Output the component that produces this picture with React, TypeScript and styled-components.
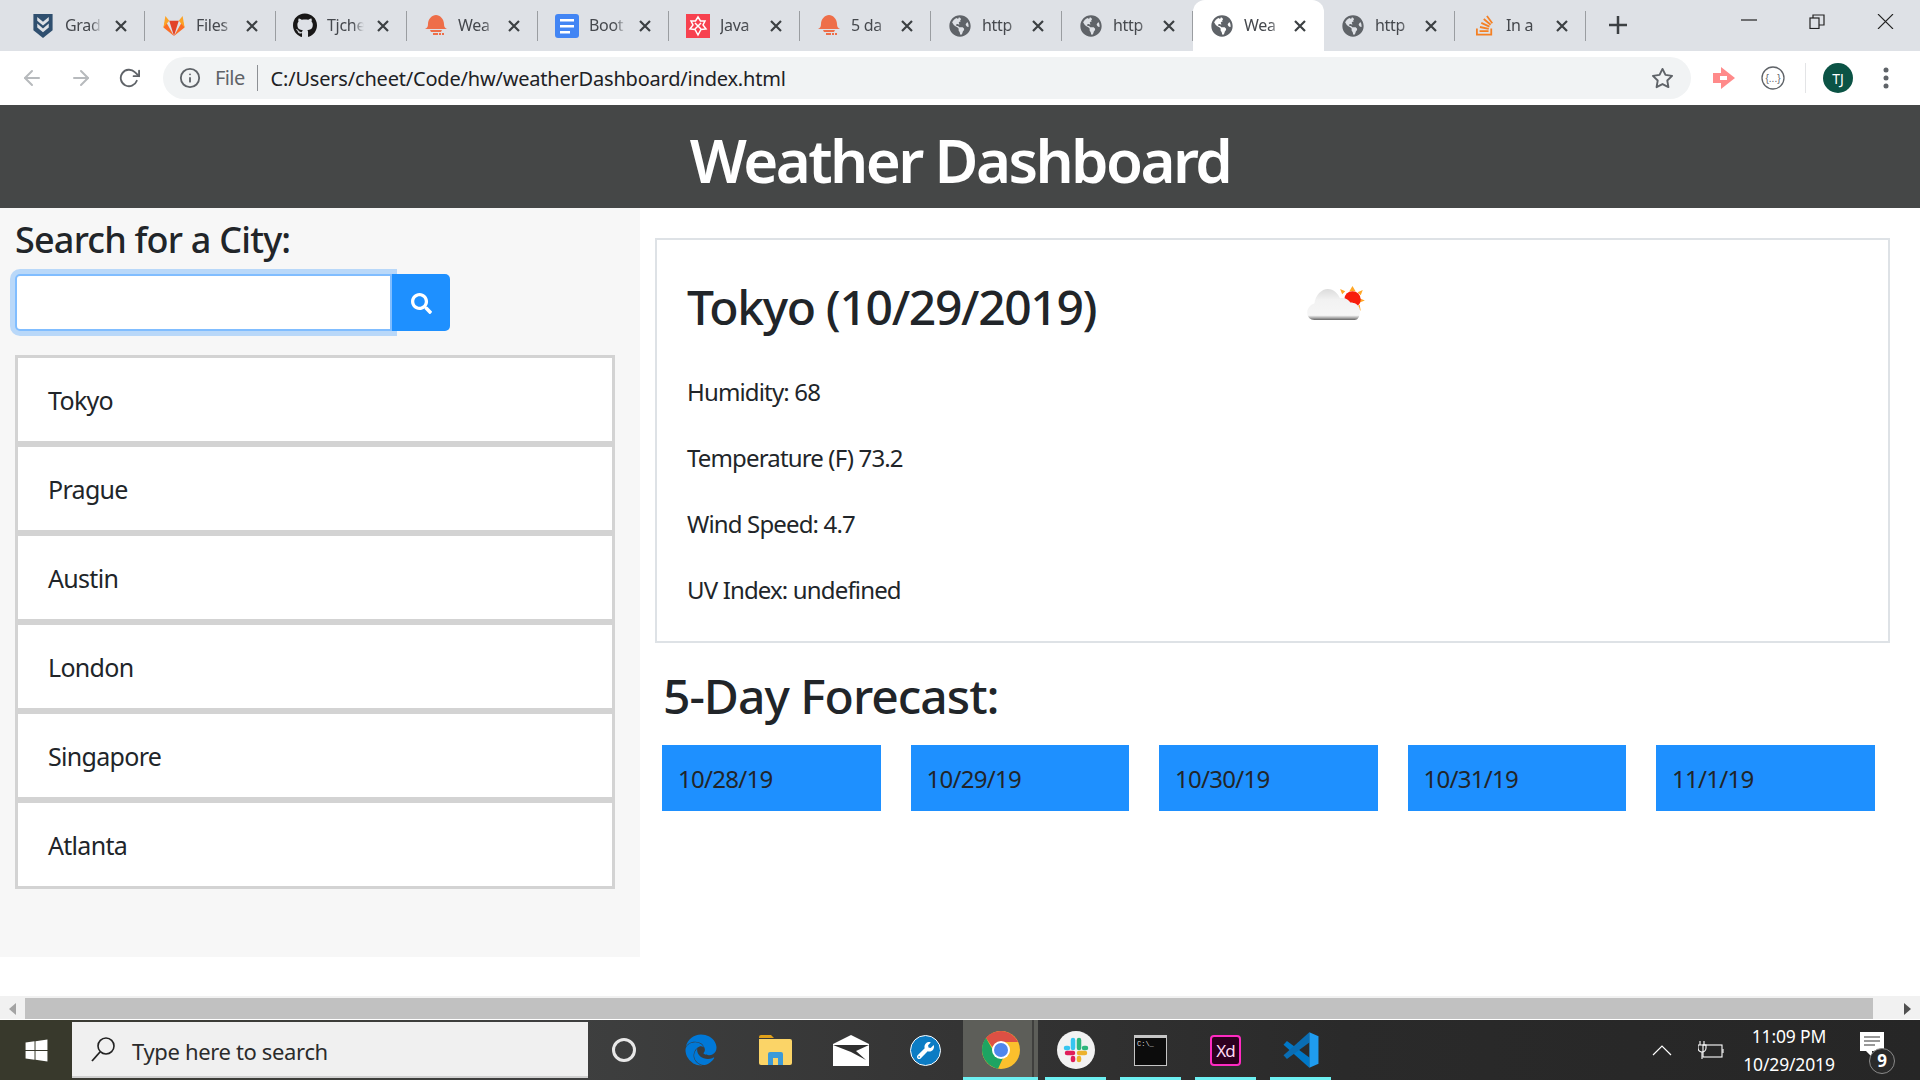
import React from "react";
import styled, { createGlobalStyle } from "styled-components";
import { FaEdge, FaGithub, FaGlobeAmericas, FaSearch, FaStackOverflow, FaWindows, FaWrench } from "react-icons/fa";
import { FiArrowLeft, FiArrowRight, FiInfo, FiRotateCw, FiStar } from "react-icons/fi";

const GlobalStyle = createGlobalStyle`
  html, body {
    margin: 0;
    padding: 0;
    width: 1920px;
    height: 1080px;
    overflow: hidden;
    background: #fff;
    font-family: "Noto Sans", "Open Sans", sans-serif;
    color: #212529;
  }
  * {
    box-sizing: border-box;
  }
`;

const Page = styled.div`
  display: flex;
  flex-direction: column;
  width: 1920px;
  height: 1080px;
`;

/* browser chrome */
const TabStrip = styled.div`
  display: flex;
  align-items: stretch;
  height: 51px;
  padding-left: 14px;
  background: #dee1e6;
`;

const Tab = styled.div<{ $active?: boolean }>`
  display: flex;
  align-items: center;
  width: 131px;
  padding-left: 17px;
  position: relative;
  background: ${(p) => (p.$active ? "#fff" : "transparent")};
  border-radius: ${(p) => (p.$active ? "12px 12px 0 0" : "0")};
  &::after {
    content: "";
    position: absolute;
    right: 0;
    top: 11px;
    height: 30px;
    width: 1px;
    background: ${(p) => (p.$active ? "transparent" : "#9a9da1")};
  }
`;

const TabIcon = styled.span`
  display: flex;
  align-items: center;
  justify-content: center;
  width: 24px;
  height: 26px;
  flex: none;
`;

const TabTitle = styled.span`
  width: 37px;
  margin: -2px 0 0 10px;
  font-size: 16px;
  letter-spacing: -0.3px;
  color: #45484d;
  white-space: nowrap;
  overflow: hidden;
  -webkit-mask-image: linear-gradient(90deg, #000 70%, transparent);
  mask-image: linear-gradient(90deg, #000 70%, transparent);
`;

const TabClose = styled.svg`
  width: 14px;
  height: 14px;
  margin-left: 12px;
  flex: none;
`;

const NewTab = styled.svg`
  width: 20px;
  height: 20px;
  margin: 15px 0 0 22px;
`;

const WindowControls = styled.div`
  display: flex;
  align-items: flex-start;
  margin-left: auto;
  padding: 14px 26px 0 0;
  gap: 52px;
`;

const Toolbar = styled.div`
  display: flex;
  align-items: center;
  height: 54px;
  padding-left: 20px;
  background: #fff;
`;

const NavButton = styled.span<{ $off?: boolean }>`
  display: flex;
  width: 24px;
  margin-right: 25px;
  color: ${(p) => (p.$off ? "#b7babd" : "#5f6368")};
`;

const Omnibox = styled.div`
  display: flex;
  align-items: center;
  width: 1528px;
  height: 42px;
  margin-left: -4px;
  padding: 0 20px 0 16px;
  border-radius: 21px;
  background: #f1f3f4;
  font-size: 20px;
`;

const SecurityLabel = styled.span`
  margin-left: 14px;
  padding-right: 12px;
  border-right: 1px solid #8d9094;
  line-height: 26px;
  font-size: 20px;
  letter-spacing: -0.6px;
  color: #5f6368;
`;

const Url = styled.span`
  margin-left: 13px;
  letter-spacing: -0.2px;
  color: #202124;
`;

const StarSlot = styled.span`
  display: flex;
  margin: 0 -3px 0 auto;
  color: #5f6368;
`;

const ExtensionArea = styled.div`
  display: flex;
  align-items: center;
  padding-left: 22px;
`;

const ToolbarDivider = styled.span`
  width: 1px;
  height: 30px;
  margin: 0 17px 0 20px;
  background: #e3e4e6;
`;

const Avatar = styled.span`
  display: flex;
  align-items: center;
  justify-content: center;
  width: 30px;
  height: 30px;
  border-radius: 50%;
  background: #0b5345;
  color: #fff;
  font-size: 14px;
`;

const MenuDots = styled.svg`
  width: 6px;
  height: 22px;
  margin-left: 30px;
`;

/* page */
const Banner = styled.header`
  display: flex;
  justify-content: center;
  height: 103px;
  background: #454747;
  color: #fff;
  font-size: 60px;
  font-weight: 600;
  line-height: 110px;
  letter-spacing: -2.6px;
`;

const Content = styled.main`
  display: flex;
  flex: 1;
  min-height: 0;
`;

const Sidebar = styled.aside`
  width: 640px;
  height: 749px;
  padding: 0 25px 0 15px;
  background: #f7f7f7;
`;

const SearchHeading = styled.h2`
  margin: 0;
  padding-top: 7px;
  font-size: 36px;
  font-weight: 500;
  line-height: 50px;
  letter-spacing: -0.8px;
`;

const SearchRow = styled.form`
  display: flex;
  margin: 9px 0 24px;
`;

const CityInput = styled.input`
  width: 377px;
  height: 57px;
  border: 2.5px solid #80bdff;
  border-radius: 5px 0 0 5px;
  box-shadow: 0 0 0 5px rgba(0, 123, 255, 0.25);
  background: #fff;
  outline: none;
`;

const SearchButton = styled.button`
  display: flex;
  align-items: center;
  justify-content: center;
  position: relative;
  width: 58px;
  height: 57px;
  padding: 2px 0 0;
  border: 0;
  border-radius: 0 5px 5px 0;
  background: #1e90ff;
  color: #fff;
`;

const CityList = styled.ul`
  width: 600px;
  margin: 0;
  padding: 0;
  list-style: none;
`;

const CityItem = styled.li`
  height: 89px;
  padding-left: 30px;
  border: 3px solid #d3d3d3;
  background: #fff;
  font-size: 25px;
  line-height: 84px;
  letter-spacing: -0.7px;
`;

const Details = styled.section`
  flex: 1;
  padding: 30px 30px 0 15px;
`;

const CurrentCard = styled.div`
  height: 405px;
  padding: 29px 30px 0;
  border: 2px solid #dee2e6;
`;

const TitleRow = styled.div`
  display: flex;
  align-items: flex-start;
`;

const CityTitle = styled.h2`
  margin: 0;
  font-size: 48px;
  font-weight: 500;
  line-height: 76px;
  letter-spacing: -1.35px;
`;

const WeatherIcon = styled.svg`
  width: 58px;
  height: 35px;
  margin: 17px 0 0 211px;
  filter: blur(0.6px);
`;

const Stat = styled.p`
  margin: 0;
  height: 66px;
  font-size: 24px;
  line-height: 66px;
  letter-spacing: -0.85px;
  &:first-of-type {
    margin-top: 14px;
  }
`;

const ForecastHeading = styled.h2`
  margin: 0;
  padding: 18px 0 0 8px;
  height: 102px;
  font-size: 48px;
  font-weight: 500;
  line-height: 70px;
  letter-spacing: -1px;
`;

const ForecastRow = styled.div`
  display: flex;
  gap: 30px;
  padding-left: 7px;
`;

const ForecastCard = styled.div`
  width: 218.5px;
  height: 66px;
  padding-left: 16px;
  background: #1e90ff;
  font-size: 24px;
  line-height: 68px;
  letter-spacing: -0.7px;
`;

/* horizontal scrollbar */
const ScrollBar = styled.div`
  display: flex;
  align-items: center;
  height: 24px;
  padding-top: 2px;
  border-bottom: 1px solid #fff;
  background: #f1f1f1;
`;

const ScrollArrow = styled.span<{ $dir: "left" | "right" }>`
  width: 0;
  height: 0;
  margin: ${(p) => (p.$dir === "left" ? "0 9px" : "0 9px 0 auto")};
  border-top: 6px solid transparent;
  border-bottom: 6px solid transparent;
  ${(p) => (p.$dir === "left" ? "border-right: 7px solid #a3a3a3;" : "border-left: 7px solid #505050;")}
`;

const ScrollThumb = styled.span`
  width: 1848px;
  height: 21px;
  background: #c1c1c1;
`;

/* windows taskbar */
const Taskbar = styled.footer`
  display: flex;
  align-items: stretch;
  height: 60px;
  background: linear-gradient(90deg, #3a3a32 0, #3e3f3f 30%, #353535 48%, #2a2a2a 70%, #262626 100%);
`;

const StartButton = styled.div`
  display: flex;
  align-items: center;
  justify-content: center;
  width: 72px;
  background: #38392c;
  color: #fff;
`;

const TaskSearch = styled.div`
  display: flex;
  align-items: center;
  width: 516px;
  margin: 2px 0;
  padding-left: 17px;
  border: 2px solid #d0d0d0;
  border-width: 0 0 2px;
  background: #f0f0f0;
  color: #2b2b2b;
  font-size: 22px;
  letter-spacing: -0.35px;
`;

const TaskSearchText = styled.span`
  padding-top: 3px;
`;

const SearchGlass = styled.svg`
  width: 28px;
  height: 28px;
  margin-right: 15px;
`;

const TaskIcons = styled.div`
  display: flex;
`;

const TaskSlot = styled.div<{ $open?: boolean; $current?: boolean }>`
  display: flex;
  align-items: center;
  justify-content: center;
  position: relative;
  width: 75px;
  background: ${(p) => (p.$current ? "linear-gradient(90deg, #5d5e59 92%, #3f3f3d 92%, #3f3f3d 95%, #5d5e59 95%)" : "transparent")};
  &::after {
    content: "";
    display: ${(p) => (p.$open ? "block" : "none")};
    position: absolute;
    left: ${(p) => (p.$current ? "0" : "7px")};
    right: ${(p) => (p.$current ? "0" : "7px")};
    bottom: 0;
    height: 3px;
    background: #6df0f2;
  }
`;

const CortanaRing = styled.span`
  width: 24px;
  height: 24px;
  margin-right: 3px;
  border: 3px solid #e8e8e8;
  border-radius: 50%;
`;

const WrenchBadge = styled.span`
  display: flex;
  align-items: center;
  justify-content: center;
  width: 31px;
  height: 31px;
  border: 1px solid #fff;
  border-radius: 50%;
  background: #0c7cc4;
  color: #fff;
`;

const XdBadge = styled.span`
  display: flex;
  align-items: center;
  justify-content: center;
  width: 31px;
  height: 31px;
  border: 2.5px solid #ff2bc2;
  border-radius: 4px;
  background: #2e001f;
  color: #ffd9f2;
  font-size: 17px;
  letter-spacing: -1px;
`;

const Tray = styled.div`
  display: flex;
  align-items: center;
  margin-left: auto;
  padding-right: 26px;
  color: #fff;
`;

const Clock = styled.div`
  width: 130px;
  font-size: 17.5px;
  line-height: 28px;
  text-align: center;
  letter-spacing: -0.15px;
`;

const NoticeWrap = styled.div`
  position: relative;
  width: 34px;
  height: 36px;
  margin-left: 6px;
`;

const NoticeBadge = styled.span`
  position: absolute;
  right: -1px;
  bottom: -6px;
  width: 26px;
  height: 26px;
  border: 1px solid #8a8a8a;
  border-radius: 50%;
  background: #2a2a2a;
  font-size: 17px;
  font-weight: 700;
  line-height: 24px;
  text-align: center;
`;

const Chevron = styled.svg`
  width: 20px;
  height: 12px;
`;

const BatteryIcon = styled.svg`
  width: 26px;
  height: 18px;
  margin-left: 26px;
`;

const ExtensionRing = styled.svg`
  width: 24px;
  height: 24px;
  margin-left: 24px;
`;

const GradeLogo = () => (
  <svg width="20" height="24" viewBox="0 0 20 25">
    <path d="M0 0h20v17l-10 8-10-8z" fill="#2f4f6f" />
    <path d="M4 3l6 5 6-5v4l-6 5-6-5zM4 10l6 5 6-5v4l-6 5-6-5z" fill="#dee1e6" />
  </svg>
);

const FoxLogo = () => (
  <svg width="24" height="23" viewBox="0 0 24 24">
    <path d="M12 23L1 14l2-7z" fill="#fc6d26" />
    <path d="M12 23l11-9-2-7z" fill="#fc6d26" />
    <path d="M12 23L7 7h10z" fill="#e24329" />
    <path d="M1 14l2-12 4 5z" fill="#fca326" />
    <path d="M23 14L21 2l-4 5z" fill="#fca326" />
  </svg>
);

const DomeLogo = () => (
  <svg width="24" height="22" viewBox="0 0 24 22">
    <path d="M1 14c2-1 3-2 3-5 0-5 4-9 8-9s8 4 8 9c0 3 1 4 3 5z" fill="#ee6e49" />
    <path d="M6 15h12l-1 2H7zM9 18h5v2H9zM15 18h2v2h-2zM18 18h2v2h-2z" fill="#ee6e49" />
  </svg>
);

const DocsLogo = () => (
  <svg width="24" height="24" viewBox="0 0 24 24">
    <rect width="24" height="24" rx="3" fill="#4285f4" />
    <path d="M5 5h14v2.500H5zM5 11h14v2.500H5zM5 17h10v2.500H5z" fill="#fff" />
  </svg>
);

const JavaLogo = () => (
  <svg width="24" height="24" viewBox="0 0 24 24">
    <rect width="24" height="24" fill="#f7414f" />
    <path d="M12 3l2.500 4H19l-2 4 3 4-5 .5L12 21l-3-5.500L4 15l3-4-2-4h4.500z" fill="none" stroke="#fff" strokeWidth="1.500" />
    <path d="M9 9l6 6M15 9l-6 6" stroke="#fff" strokeWidth="1.500" />
  </svg>
);

const Globe = () => <FaGlobeAmericas size={22} color="#5f6368" />;

const tabs = [
  { title: "Grad", icon: <GradeLogo /> },
  { title: "Files", icon: <FoxLogo /> },
  { title: "Tjche", icon: <FaGithub size={25} color="#181717" /> },
  { title: "Wea", icon: <DomeLogo /> },
  { title: "Boot", icon: <DocsLogo /> },
  { title: "Java", icon: <JavaLogo /> },
  { title: "5 da", icon: <DomeLogo /> },
  { title: "http", icon: <Globe /> },
  { title: "http", icon: <Globe /> },
  { title: "Wea", icon: <Globe />, active: true },
  { title: "http", icon: <Globe /> },
  { title: "In a", icon: <FaStackOverflow size={23} color="#f48024" /> },
];

const cities = ["Tokyo", "Prague", "Austin", "London", "Singapore", "Atlanta"];
const stats = ["Humidity: 68", "Temperature (F) 73.2", "Wind Speed: 4.7", "UV Index: undefined"];
const forecast = ["10/28/19", "10/29/19", "10/30/19", "10/31/19", "11/1/19"];

const SlackLogo = () => (
  <svg width="38" height="38" viewBox="0 0 38 38">
    <circle cx="19" cy="19" r="19" fill="#f2f2f2" />
    <g strokeWidth="4.500" strokeLinecap="round" fill="none">
      <path d="M16 9v8M9 17h2" stroke="#36c5f0" />
      <path d="M22 9v8M27 17h2" stroke="#2eb67d" />
      <path d="M10 22h6M16 27v2" stroke="#e01e5a" />
      <path d="M22 22h6M22 27v2" stroke="#ecb22e" />
    </g>
  </svg>
);

const ChromeLogo = () => (
  <svg width="38" height="38" viewBox="0 0 38 38">
    <circle cx="19" cy="19" r="19" fill="#fbc02d" />
    <path d="M19 0c8 0 14 5 17 11H19c-4 0-7 2-8 6L4 7c3-4 9-7 15-7z" fill="#dd5044" />
    <path d="M4 7l8 14c2 4 5 6 9 6l-5 10.800C7 36 0 28 0 19c0-5 1-8 4-12z" fill="#1da462" />
    <circle cx="19" cy="19" r="9" fill="#fff" />
    <circle cx="19" cy="19" r="7" fill="#4f86ec" />
  </svg>
);

const FolderLogo = () => (
  <svg width="33" height="30" viewBox="0 0 33 30">
    <path d="M0 2a2 2 0 0 1 2-2h10l3 3H0z" fill="#e0a019" />
    <path d="M0 4h31a2 2 0 0 1 2 2v22a2 2 0 0 1-2 2H2a2 2 0 0 1-2-2z" fill="#fbd467" />
    <path d="M9 30V19a2 2 0 0 1 2-2h11a2 2 0 0 1 2 2v11h-5v-7h-5v7z" fill="#3c9ad8" />
  </svg>
);

const MailLogo = () => (
  <svg width="36" height="31" viewBox="0 0 36 31">
    <path d="M0 9L18 0l18 9v22H0z" fill="#fff" />
    <path d="M0 10h36l-13 6 10 9-15-8z" fill="#2f2f2f" />
  </svg>
);

const TerminalLogo = () => (
  <svg width="33" height="31" viewBox="0 0 33 31">
    <rect width="33" height="31" fill="#c6c6c6" />
    <rect x="1" y="3" width="31" height="27" fill="#0c0c0c" />
    <text x="3" y="11" fontSize="7" fill="#ddd" fontFamily="Liberation Mono, monospace">C:\_</text>
  </svg>
);

const VsCodeLogo = () => (
  <svg width="38" height="38" viewBox="0 0 100 100">
    <path d="M13 26l59 44v27L4 36z" fill="#0078c8" />
    <path d="M72 3v27L13 74 4 64z" fill="#0a6db3" />
    <path d="M72 3l24 11v72L72 97z" fill="#1f9cf0" />
  </svg>
);

const WeatherGlyph = () => (
  <WeatherIcon viewBox="0 0 56 34">
    <defs>
      <linearGradient id="cloud" x1="0" y1="0" x2="0" y2="1">
        <stop offset="0" stopColor="#dcdcdc" />
        <stop offset="0.35" stopColor="#f2f2f2" />
        <stop offset="0.85" stopColor="#f6f6f6" />
        <stop offset="0.92" stopColor="#b5b5b5" />
        <stop offset="1" stopColor="#666" />
      </linearGradient>
    </defs>
    <g fill="#ffa726">
      <path d="M32 3l5 2-3 3zM44 0l3 5h-6zM54 4l-2 5-3-3zM56 14l-5 2v-4zM52 24l-4-3 3-3z" />
    </g>
    <circle cx="44" cy="13" r="8" fill="#f81e0c" />
    <path d="M7 33c-4 0-7-3-7-7s3-8 7-9c1-8 7-14 13-14 6 0 10 5 12 9 4-1 8 1 10 4 4 0 8 2 9 6 1 6-1 11-5 11z" fill="url(#cloud)" />
  </WeatherIcon>
);

function App() {
  return (
    <Page>
      <GlobalStyle />
      <TabStrip>
        {tabs.map((tab, i) => (
          <Tab key={i} $active={tab.active}>
            <TabIcon>{tab.icon}</TabIcon>
            <TabTitle>{tab.title}</TabTitle>
            <TabClose viewBox="0 0 14 14">
              <path d="M2 2l10 10M12 2L2 12" stroke="#3c4043" strokeWidth="2.200" />
            </TabClose>
          </Tab>
        ))}
        <NewTab viewBox="0 0 20 20">
          <path d="M10 1v18M1 10h18" stroke="#3c4043" strokeWidth="2.500" />
        </NewTab>
        <WindowControls>
          <svg width="16" height="15" viewBox="0 0 16 15">
            <path d="M0 6h16" stroke="#222" strokeWidth="1.200" />
          </svg>
          <svg width="16" height="15" viewBox="0 0 16 15" fill="none" stroke="#222" strokeWidth="1.200">
            <rect x="1" y="4" width="9" height="10.500" />
            <path d="M4 4V1h11v10h-5" />
          </svg>
          <svg width="17" height="15" viewBox="0 0 17 15">
            <path d="M1 0l15 15M16 0L1 15" stroke="#222" strokeWidth="1.100" />
          </svg>
        </WindowControls>
      </TabStrip>

      <Toolbar>
        <NavButton $off><FiArrowLeft size={24} /></NavButton>
        <NavButton $off><FiArrowRight size={24} /></NavButton>
        <NavButton><FiRotateCw size={22} /></NavButton>
        <Omnibox>
          <FiInfo size={22} color="#5f6368" />
          <SecurityLabel>File</SecurityLabel>
          <Url>C:/Users/cheet/Code/hw/weatherDashboard/index.html</Url>
          <StarSlot><FiStar size={23} /></StarSlot>
        </Omnibox>
        <ExtensionArea>
          <svg width="24" height="26" viewBox="0 0 24 26">
            <path d="M0 8h8V2l14 11L8 24v-6H0z" fill="#ff8a8a" />
            <path d="M7 11h7v4H7z" fill="#fff" />
          </svg>
          <ExtensionRing viewBox="0 0 24 24">
            <circle cx="12" cy="12" r="11" fill="none" stroke="#5f6368" strokeWidth="1.300" />
            <text x="12" y="16" fontSize="10" textAnchor="middle" fill="#5f6368" fontFamily="Liberation Sans, sans-serif">{"{...}"}</text>
          </ExtensionRing>
          <ToolbarDivider />
          <Avatar>TJ</Avatar>
          <MenuDots viewBox="0 0 6 22">
            <circle cx="3" cy="3" r="2.500" fill="#5f6368" />
            <circle cx="3" cy="11" r="2.500" fill="#5f6368" />
            <circle cx="3" cy="19" r="2.500" fill="#5f6368" />
          </MenuDots>
        </ExtensionArea>
      </Toolbar>

      <Banner>Weather Dashboard</Banner>

      <Content>
        <Sidebar>
          <SearchHeading>Search for a City:</SearchHeading>
          <SearchRow>
            <CityInput type="text" />
            <SearchButton type="button"><FaSearch size={21} /></SearchButton>
          </SearchRow>
          <CityList>
            {cities.map((city) => (
              <CityItem key={city}>{city}</CityItem>
            ))}
          </CityList>
        </Sidebar>

        <Details>
          <CurrentCard>
            <TitleRow>
              <CityTitle>Tokyo (10/29/2019)</CityTitle>
              <WeatherGlyph />
            </TitleRow>
            {stats.map((stat) => (
              <Stat key={stat}>{stat}</Stat>
            ))}
          </CurrentCard>
          <ForecastHeading>5-Day Forecast:</ForecastHeading>
          <ForecastRow>
            {forecast.map((day) => (
              <ForecastCard key={day}>{day}</ForecastCard>
            ))}
          </ForecastRow>
        </Details>
      </Content>

      <ScrollBar>
        <ScrollArrow $dir="left" />
        <ScrollThumb />
        <ScrollArrow $dir="right" />
      </ScrollBar>

      <Taskbar>
        <StartButton><FaWindows size={25} /></StartButton>
        <TaskSearch>
          <SearchGlass viewBox="0 0 28 28">
            <circle cx="17" cy="11" r="8" fill="none" stroke="#222" strokeWidth="1.600" />
            <path d="M11 17L3 26" stroke="#222" strokeWidth="1.800" />
          </SearchGlass>
          <TaskSearchText>Type here to search</TaskSearchText>
        </TaskSearch>
        <TaskIcons>
          <TaskSlot><CortanaRing /></TaskSlot>
          <TaskSlot><FaEdge size={32} color="#0078d7" /></TaskSlot>
          <TaskSlot><FolderLogo /></TaskSlot>
          <TaskSlot><MailLogo /></TaskSlot>
          <TaskSlot><WrenchBadge><FaWrench size={17} /></WrenchBadge></TaskSlot>
          <TaskSlot $open $current><ChromeLogo /></TaskSlot>
          <TaskSlot $open><SlackLogo /></TaskSlot>
          <TaskSlot $open><TerminalLogo /></TaskSlot>
          <TaskSlot $open><XdBadge>Xd</XdBadge></TaskSlot>
          <TaskSlot $open><VsCodeLogo /></TaskSlot>
        </TaskIcons>
        <Tray>
          <Chevron viewBox="0 0 20 12">
            <path d="M1 11l9-9 9 9" fill="none" stroke="#fff" strokeWidth="1.200" />
          </Chevron>
          <BatteryIcon viewBox="0 0 26 18" fill="none" stroke="#fff" strokeWidth="1.100">
            <rect x="5" y="4" width="19" height="12" />
            <path d="M25 8v4" />
            <path d="M2 0v4M6 0v4M0 4h8v3a4 4 0 0 1-8 0zM4 11v7" />
          </BatteryIcon>
          <Clock>
            11:09 PM
            <br />
            10/29/2019
          </Clock>
          <NoticeWrap>
            <svg width="24" height="28" viewBox="0 0 24 28">
              <path d="M0 0h24v19H12l0 6-6-6H0z" fill="#fff" />
              <path d="M4 5h16M4 9h16M4 13h11" stroke="#333" strokeWidth="1.200" />
            </svg>
            <NoticeBadge>9</NoticeBadge>
          </NoticeWrap>
        </Tray>
      </Taskbar>
    </Page>
  );
}

export default App;
